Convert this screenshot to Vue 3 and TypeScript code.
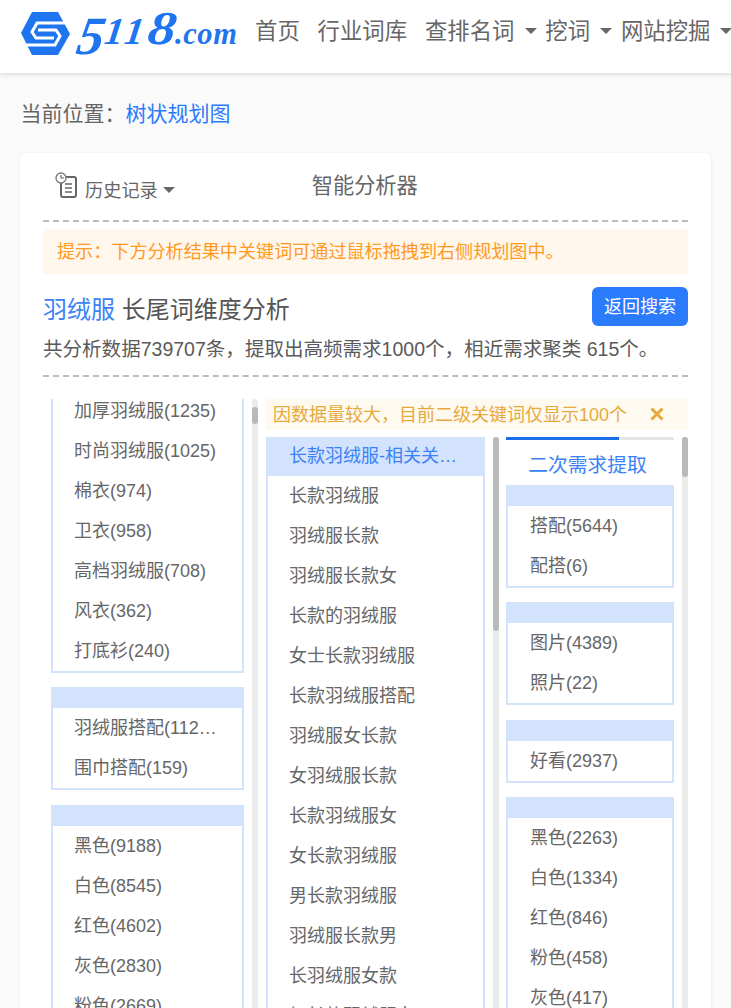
<script setup lang="ts">
interface Group { items: string[] }

const firstGroup: string[] = ['加厚羽绒服(1235)', '时尚羽绒服(1025)', '棉衣(974)', '卫衣(958)', '高档羽绒服(708)', '风衣(362)', '打底衫(240)']
const leftGroups: Group[] = [
  { items: ['羽绒服搭配(11277)', '围巾搭配(159)'] },
  { items: ['黑色(9188)', '白色(8545)', '红色(4602)', '灰色(2830)', '粉色(2669)'] },
]
const midRows: string[] = ['长款羽绒服', '羽绒服长款', '羽绒服长款女', '长款的羽绒服', '女士长款羽绒服', '长款羽绒服搭配', '羽绒服女长款', '女羽绒服长款', '长款羽绒服女', '女长款羽绒服', '男长款羽绒服', '羽绒服长款男', '长羽绒服女款', '加长款羽绒服女']
const rightGroups: Group[] = [
  { items: ['搭配(5644)', '配搭(6)'] },
  { items: ['图片(4389)', '照片(22)'] },
  { items: ['好看(2937)'] },
  { items: ['黑色(2263)', '白色(1334)', '红色(846)', '粉色(458)', '灰色(417)'] },
]
</script>

<template>
  <div class="page">
    <header class="topbar">
      <a class="logo">
        <svg class="logo-mark" width="50" height="44" viewBox="0 0 50 44">
          <path d="M0 21 L11 0 L37 0 L49 22 L37 43 L11 43 Z" fill="#1f74f0" />
          <path d="M50 11 L16 11 L11 20 L15 26 L33 26 M0 33 L34 33 L39 24 L35 18 L17 18" fill="none" stroke="#fff" stroke-width="3" />
        </svg>
        <span class="logo-word"><span class="d5">5</span><span class="d1">1</span><span class="d1">1</span><span class="d8">8</span><span class="com">.com</span></span>
      </a>
      <nav class="nav">
        <span>首页</span>
        <span>行业词库</span>
        <span class="drop">查排名词<i class="caret" /></span>
        <span class="drop">挖词<i class="caret" /></span>
        <span class="drop">网站挖掘<i class="caret" /></span>
      </nav>
    </header>

    <div class="crumb">当前位置：<a>树状规划图</a></div>

    <section class="card">
      <div class="tool-row">
        <div class="history">
          <svg width="22" height="26" viewBox="0 0 22 26">
            <rect x="6" y="5" width="15" height="20" rx="2" fill="#fff" stroke="#666" stroke-width="2" />
            <path d="M10 12h7M10 16h7M10 20h7" stroke="#666" stroke-width="1.6" fill="none" />
            <circle cx="6" cy="6" r="5" fill="#fff" stroke="#777" stroke-width="1.3" />
            <path d="M6 3v3h3" stroke="#666" stroke-width="1.2" fill="none" />
          </svg>
          <span class="history-label">历史记录</span>
          <i class="caret small" />
        </div>
        <div class="analyzer">智能分析器</div>
      </div>
      <div class="dash" />
      <div class="hint">提示：下方分析结果中关键词可通过鼠标拖拽到右侧规划图中。</div>
      <div class="title-row">
        <h2 class="title"><span class="kw">羽绒服</span> 长尾词维度分析</h2>
        <button class="back">返回搜索</button>
      </div>
      <p class="stat">共分析数据739707条，提取出高频需求1000个，相近需求聚类 615个。</p>
      <div class="dash second" />

      <div class="workspace">
        <div class="left-pane">
          <div class="col-left">
            <div class="shifted">
              <div class="group no-head">
                <div v-for="t in firstGroup" :key="t" class="row">{{ t }}</div>
              </div>
              <div v-for="(g, i) in leftGroups" :key="i" class="group">
                <div class="group-head" />
                <div v-for="t in g.items" :key="t" class="row">{{ t }}</div>
              </div>
            </div>
          </div>
          <div class="bar bar-left"><div class="thumb" /></div>
        </div>

        <div class="right-pane">
          <div class="alert">
            <span>因数据量较大，目前二级关键词仅显示100个</span>
            <svg width="14" height="14" viewBox="0 0 14 14"><path d="M1.5 1.5l11 11M12.5 1.5l-11 11" stroke="#e6a93c" stroke-width="3" fill="none" /></svg>
          </div>
          <div class="columns">
            <div class="col-mid">
              <div class="row active">长款羽绒服-相关关键词</div>
              <div v-for="t in midRows" :key="t" class="row">{{ t }}</div>
            </div>
            <div class="bar bar-mid"><div class="thumb" /></div>
            <div class="col-right">
              <div class="progress"><div class="progress-fill" /></div>
              <div class="extract">二次需求提取</div>
              <div v-for="(g, i) in rightGroups" :key="i" class="group">
                <div class="group-head" />
                <div v-for="t in g.items" :key="t" class="row">{{ t }}</div>
              </div>
            </div>
            <div class="bar bar-right"><div class="thumb" /></div>
          </div>
        </div>
      </div>
    </section>
  </div>
</template>

<style>
html, body { margin: 0; height: 1008px; overflow: hidden; background: #fafafa; }
</style>

<style scoped>
.page {
  height: 1008px;
  overflow: hidden;
  background: #fafafa;
  color: #666;
  font-family: "Liberation Sans", "Noto Sans CJK SC", sans-serif;
}
.topbar {
  height: 73px;
  background: #fff;
  box-shadow: 0 1px 5px rgba(0, 0, 0, 0.16);
  display: flex;
  align-items: flex-start;
  padding-left: 21px;
  white-space: nowrap;
  overflow: hidden;
  position: relative;
}
.logo { display: flex; align-items: flex-start; width: 234px; flex: none; color: #1f74f0; }
.logo-mark { margin-top: 12px; margin-right: 7px; flex: none; }
.logo-word {
  display: flex;
  align-items: baseline;
  height: 44px;
  padding-top: 1px;
  font-family: "Liberation Serif", serif;
  font-style: italic;
  font-weight: 700;
  line-height: 50px;
}
.logo-word span { display: block; }
.d5 { font-size: 54px; width: 27px; transform: translateY(10px) skewX(-10deg); }
.d1 { font-size: 38px; width: 20px; transform: skewX(-8deg); }
.d8 { font-size: 47px; width: 30px; transform: scaleX(1.2) skewX(-6deg); transform-origin: left bottom; }
.com { font-size: 30.5px; letter-spacing: 0.6px; }
.nav { display: flex; gap: 17.8px; font-size: 22.4px; line-height: 32px; padding-top: 16px; color: #666; }
.drop { display: flex; align-items: center; }
.caret {
  display: block;
  width: 0;
  height: 0;
  margin-left: 10px;
  margin-right: -9px;
  border-left: 6px solid transparent;
  border-right: 6px solid transparent;
  border-top: 6px solid #666;
  margin-top: -3px;
}
.crumb { margin-top: 25px; font-size: 21px; line-height: 32px; padding-left: 20.5px; }
.crumb a { color: #2b7bfd; }
.card {
  margin: 23px 20px 0;
  background: #fff;
  border-radius: 6px;
  padding: 0 23px;
  box-shadow: 0 0 4px rgba(0, 0, 0, 0.06);
  height: 900px;
}
.tool-row { height: 67px; display: flex; align-items: flex-start; }
.history { display: flex; align-items: center; margin-left: 12px; margin-top: 19px; height: 26px; }
.history-label { font-size: 18.2px; margin-left: 8px; margin-top: 7px; }
.caret.small { margin: 9px 0 0 5px; }
.analyzer { font-size: 21.2px; line-height: 30px; margin-left: 137px; margin-top: 18px; }
.dash { border-top: 2px dashed #bbb; }
.hint {
  margin-top: 7px;
  height: 45px;
  line-height: 46px;
  background: #fff6ec;
  color: #ff9a1f;
  font-size: 18.1px;
  padding-left: 14px;
}
.title-row { display: flex; justify-content: space-between; align-items: flex-start; margin-top: 12px; }
.title { margin: 0; font-size: 24px; font-weight: 400; line-height: 48px; height: 46px; color: #555; }
.kw { color: #3b82f6; }
.back {
  margin-top: 1px;
  width: 96px;
  height: 39px;
  border: 0;
  border-radius: 6px;
  background: #2b7bfd;
  color: #fff;
  font: inherit;
  font-size: 18px;
  padding: 0 0 3px;
}
.stat { margin: 2px 0 0; font-size: 19.55px; line-height: 30px; height: 29px; color: #5a5a5a; white-space: nowrap; }
.dash.second { margin-top: 12px; }
.workspace { display: flex; margin-top: 22px; height: 700px; }
.left-pane { display: flex; gap: 8px; margin-left: 8px; }
.col-left { width: 193px; overflow: hidden; }
.shifted { margin-top: -8px; }
.group { border: 2px solid #d3e3fd; border-top: 0; margin-top: 15px; }
.group.no-head { margin-top: 0; margin-bottom: -1px; }
.group-head { height: 21px; background: #d3e3fd; margin: 0 -2px; }
.row {
  height: 40px;
  line-height: 40px;
  font-size: 18px;
  padding: 0 21px;
  white-space: nowrap;
  overflow: hidden;
  text-overflow: ellipsis;
}
.bar { width: 6px; background: #ebebeb; border-radius: 3px; flex: none; }
.thumb { background: #b9b9b9; border-radius: 3px; }
.bar-left .thumb { height: 17px; margin-top: 8px; }
.bar-mid .thumb { height: 194px; }
.bar-right .thumb { height: 40px; }
.right-pane { margin-left: 7px; width: 423px; display: flex; flex-direction: column; }
.alert {
  height: 31px;
  background: #fffaf0;
  color: #e6a93c;
  font-size: 18px;
  line-height: 30px;
  padding: 0 24px 0 8px;
  display: flex;
  justify-content: space-between;
  align-items: center;
  flex: none;
}
.alert svg { margin-top: -2px; }
.columns { display: flex; margin-top: 7px; margin-left: 1px; flex: 1; min-height: 0; overflow: hidden; }
.col-mid { width: 219px; box-sizing: border-box; border: 2px solid #d3e3fd; border-width: 0 2px; flex: none; margin-right: 8px; }
.col-mid .row { padding: 0 21px; line-height: 41px; }
.col-mid .row.active { height: 39px; line-height: 39px; background: #d3e3fd; color: #3b82f6; margin: 0 -2px; padding: 0 23px; }
.bar-mid { margin-right: 7px; }
.col-right { width: 168px; flex: none; margin-right: 8px; }
.progress { height: 3px; background: #e6e6e6; }
.progress-fill { height: 3px; width: 113px; background: #1a6fe8; }
.extract { height: 45px; line-height: 50px; text-align: center; font-size: 19.8px; color: #3b82f6; padding-right: 5px; }
.col-right .group { margin-top: 14.33px; }
.col-right .row { padding: 0 22px; }
.col-right .extract + .group { margin-top: 0; }
</style>
